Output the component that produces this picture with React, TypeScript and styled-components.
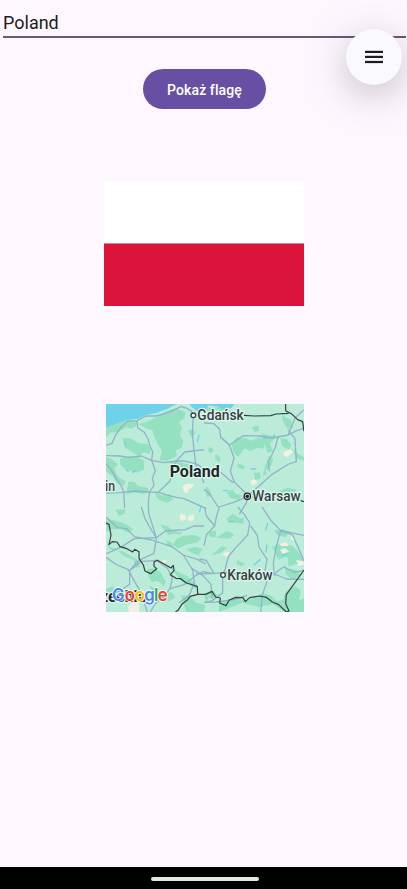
import React from 'react';
import styled, { createGlobalStyle } from 'styled-components';

const GlobalStyle = createGlobalStyle`
  * { box-sizing: border-box; }
  html, body { margin: 0; padding: 0; background: #fef7ff; }
  body { font-family: Roboto, "Liberation Sans", sans-serif; overflow: hidden; }
`;

const Screen = styled.div`
  position: relative;
  display: flex;
  flex-direction: column;
  width: 407px;
  height: 889px;
  background: #fef7ff;
  overflow: hidden;
`;

const Content = styled.main`
  flex: 1;
  display: flex;
  flex-direction: column;
  align-items: center;
  padding: 0 1px 0 3px;
`;

const CountryInput = styled.input`
  align-self: stretch;
  height: 38px;
  padding: 8px 0 0;
  border: 0;
  border-bottom: 2px solid #685b77;
  border-radius: 0;
  outline: 0;
  background: transparent;
  color: #1d1b20;
  font: 400 18px/28px Roboto, "Liberation Sans", sans-serif;
  letter-spacing: 0;
`;

const ShowButton = styled.button`
  width: 123px;
  height: 40px;
  margin-top: 31px;
  padding: 2px 0 0;
  border: 0;
  border-radius: 20px;
  background: #6750a4;
  color: #fff;
  font: 500 14px/20px Roboto, "Liberation Sans", sans-serif;
  letter-spacing: 0.1px;
`;

const Flag = styled.div`
  display: flex;
  flex-direction: column;
  width: 200px;
  height: 125px;
  margin: 72px 1px 0 0;
`;

const Stripe = styled.div<{ $color: string; $height: number }>`
  height: ${(p) => p.$height}px;
  background: ${(p) => p.$color};
`;

const MapView = styled.svg`
  display: block;
  width: 198px;
  height: 208px;
  margin: 98px 0 0 1px;
`;

const MenuFab = styled.button`
  position: absolute;
  top: 28.5px;
  left: 346px;
  display: flex;
  align-items: center;
  justify-content: center;
  width: 56px;
  height: 56px;
  padding: 0;
  border: 0;
  border-radius: 50%;
  background: #f9f9ff;
  box-shadow: 0 10px 30px rgba(20, 10, 20, 0.14), 0 8px 60px rgba(20, 10, 20, 0.12);
`;

const NavigationBar = styled.footer`
  display: flex;
  align-items: center;
  justify-content: center;
  height: 22px;
  padding: 2px 0 0 2px;
  background: #000;
`;

const HomeHandle = styled.div`
  width: 108px;
  height: 4px;
  border-radius: 2px;
  background: #e6e6e6;
`;

const forests = [
  'M6 78L40 61 74 53 99 58 96 72 81 80 67 76 43 90 19 92 6 105Z',
  'M103 67L133 58 164 42 187 27 216 19 244 30 242 48 225 60 234 78 227 98 238 116 232 139 214 145 219 162 188 177 166 174 174 147 162 128 150 102 145 85 125 78Z',
  'M57 108L78 109 105 124 131 126 140 141 137 156 119 151 104 162 78 146 61 134Z',
  'M48 170L75 162 104 165 121 178 119 204 98 212 63 201 49 188Z',
  'M6 166L22 170 42 187 31 199 41 223 65 238 59 253 39 244 25 222 6 208Z',
  'M72 240L90 239 103 252 131 257 135 271 114 277 91 271 68 278Z',
  'M150 270L173 280 196 278 209 292 190 302 164 293Z',
  'M198 177L226 181 258 188 277 203 258 207 231 195 201 195Z',
  'M252 87L265 81 276 93 263 106Z',
  'M300 12L319 17 346 15 375 21 383 29 360 31 335 23 311 29Z',
  'M383 124L398 106 424 108 441 116 467 106 486 118 477 140 459 137 439 148 423 139 402 165 388 151Z',
  'M473 94L501 102 512 95 516 108 497 124 507 147 492 154 484 133Z',
  'M443 75L463 71 467 86 452 91Z',
  'M314 135L330 142 322 155 311 147Z',
  'M335 155L350 167 348 183 333 172Z',
  'M529 109L547 110 562 128 556 144 535 133Z',
  'M533 38L560 54 568 75 554 85 538 61Z',
  'M564 139L587 159 600 166 600 176 575 169Z',
  'M401 184L423 193 417 203 400 196Z',
  'M450 213L468 211 470 229 453 235Z',
  'M495 162L508 171 502 190 485 207 489 218 476 221 482 196Z',
  'M526 267L550 257 577 263 568 282 536 281Z',
  'M305 252L317 264 323 281 308 285Z',
  'M367 270L386 263 396 275 413 280 405 295 378 287Z',
  'M6 351L32 355 56 362 75 371 87 383 74 393 49 381 22 382 6 390Z',
  'M35 323L65 322 61 336 45 342Z',
  'M168 367L191 373 203 384 224 391 235 389 229 398 208 395 194 399 180 383Z',
  'M218 410L237 401 273 399 292 407 281 421 251 427 221 439 206 430Z',
  'M247 442L273 434 295 441 284 460 263 453Z',
  'M188 414L204 422 207 438 188 431Z',
  'M129 502L152 499 171 512 185 538 180 552 162 537 144 540 132 518Z',
  'M195 491L222 510 248 522 265 536 281 548 276 560 249 547 231 538 217 518Z',
  'M6 418L22 437 39 440 33 449 15 440Z',
  'M41 447L57 448 79 461 103 475 108 494 95 498 88 473 61 463Z',
  'M6 561L24 553 42 565 55 578 36 588 6 590Z',
  'M134 551L157 559 174 577 203 570 214 586 196 598 164 588Z',
  'M231 581L256 580 276 602 304 609 300 630 247 630 239 607Z',
  'M315 387L337 387 334 407 315 402Z',
  'M367 349L387 335 408 350 420 345 418 366 395 362 374 362Z',
  'M337 407L368 387 391 396 378 410Z',
  'M322 460L353 433 370 437 350 453Z',
  'M511 385L535 381 556 390 545 405 520 400Z',
  'M505 435L530 424 566 432 591 459 600 493 576 485 554 495 550 464 523 473Z',
  'M401 474L424 487 413 493 397 485Z',
  'M300 575L326 563 341 582 331 595 316 586 306 603Z',
  'M345 602L389 587 430 596 476 574 503 581 517 597 537 595 545 568 574 553 590 565 585 595 600 589 600 630 543 630 505 606 464 616 416 602 375 619 345 630Z',
  'M541 479L549 500 577 503 591 519 565 533 545 516Z',
];

const pale = [
  'M235 254L246 245 271 246 264 257 253 263 250 274 240 269Z',
  'M539 151L558 141 570 151 561 155 549 166 539 160Z',
  'M438 239L450 231 462 241 447 251Z',
  'M227 344L232 334 245 341 246 352 231 357Z',
  'M251 344L268 335 271 347 265 358 251 355Z',
  'M71 613L94 596 106 607 105 630 75 630Z',
  'M528 443L543 438 556 449 536 455Z',
  'M525 425L548 421 553 432 533 433Z',
  'M355 456L370 449 382 457 366 464Z',
  'M577 474L598 478 600 490 583 492Z',
  'M560 402L573 410 569 418 559 409Z',
  'M175 475L186 474 187 481 177 484Z',
];

const roads = [
  'M6 130L24 124 34 101 52 74 72 58 99 56 126 42 156 42 193 32 231 14 247 18 263 28 268 43 265 95 270 145 275 185 300 243',
  'M99 56L101 77 121 91 132 111 139 136 146 149 143 175 154 206 145 229 150 249 137 270 133 300 134 334 157 407',
  'M6 161L48 162 75 166 112 162 144 176 181 182 217 177 242 150 266 147 300 143',
  'M6 185L21 203 35 227 50 249 59 267 62 318',
  'M6 273L50 272 91 267 137 270 163 271 207 284 240 290 272 304 307 320',
  'M163 271L198 237 208 199 217 177',
  'M217 177L242 177 281 187 301 204',
  'M300 63L330 65 347 82 350 106 376 129 390 168 379 207 391 240 431 280 427 302 406 337',
  'M350 106L377 129 417 101 468 102 502 108 553 99 573 88 598 79',
  'M553 99L573 48 600 23',
  'M553 85L573 110 577 180',
  'M522 105L515 133 503 160 493 177 496 208',
  'M430 284L466 251 504 217 554 186 577 179',
  'M300 262L317 276 345 318 337 345 332 372 308 397 300 431',
  'M350 211L384 240 391 240',
  'M345 315L397 298 430 284',
  'M401 315L421 337 437 363 431 399 399 433 374 462 363 501 356 522 356 573 323 597 300 602',
  'M440 372L460 400 465 435 489 472 482 512 488 543 475 578 470 630',
  'M474 315L501 356 530 386 518 430 508 481 510 514 487 521',
  'M530 386L566 399 579 428 600 477',
  'M530 386L600 400',
  'M300 510L327 514 361 512 424 518 483 514 519 519 547 531 600 532',
  'M157 407L185 387 244 383 270 372 300 372',
  'M112 315L123 350 144 387 157 407 150 454 117 469 98 480 77 506 77 547 46 568 6 576',
  'M6 345L41 377 68 380 91 404 143 414 202 433 238 459 280 472 306 486',
  'M6 456L55 433 91 410 157 407',
  'M6 466L39 489 72 502 92 539 111 571 130 630',
  'M77 506L110 479 157 475 190 498 205 529 198 560 177 586 153 606 139 630',
  'M198 560L240 548 276 520 300 507',
  'M238 459L266 504 271 542 255 581 225 602',
  'M263 499L296 520 321 547 324 589',
  'M276 516L330 514 307 475 286 471',
  'M510 515L539 495 573 511 600 505',
  'M302 315L307 342 332 372',
  'M303 601L338 600 392 592 429 580',
];

const borders = [
  'M545 6L545 26 562 35 581 53 596 59 600 88',
  'M600 299L590 296',
  'M6 363L15 367 21 399 15 428 25 419 39 420 48 434 66 439 86 450 92 442 105 449 105 469 118 489 123 507 140 515 158 500 150 493 150 480 160 475 180 486 201 498 208 490 210 506 199 518 216 529 230 530 247 543 258 546 280 554 281 577 259 583 249 595 235 605 222 625 214 630',
  'M280 577L305 577 324 568 335 585 349 588 347 603 366 611 376 594 395 586 417 587 424 599 437 587 467 582 487 586 505 600 524 608 547 630 555 627 545 605 547 578 600 504',
];

interface LabelProps {
  x: number;
  y: number;
  text: string;
  width?: number;
  bold?: boolean;
}

const MapLabel = styled.text<{ $bold?: boolean }>`
  font: ${(p) => (p.$bold ? '700 49px' : '500 42px')} Roboto, "Liberation Sans", sans-serif;
  fill: ${(p) => (p.$bold ? '#20292a' : '#354245')};
  stroke: #e0f6ed;
  stroke-width: 7px;
  stroke-linejoin: round;
  paint-order: stroke;
`;

const Wordmark = styled.text`
  font: 600 50px Inter, Roboto, sans-serif;
  stroke: #fff;
  stroke-width: 4px;
  stroke-linejoin: round;
  paint-order: stroke;
`;

function PlaceLabel({ x, y, text, width, bold }: LabelProps) {
  return (
    <MapLabel x={x} y={y} textLength={width} lengthAdjust="spacingAndGlyphs" $bold={bold}>
      {text}
    </MapLabel>
  );
}

const wordmark: [string, string, number][] = [
  ['G', '#4285f4', 24],
  ['o', '#ea4335', 62],
  ['o', '#fbbc05', 92],
  ['g', '#4285f4', 121],
  ['l', '#34a853', 150],
  ['e', '#ea4335', 161],
];

function PolandMap() {
  return (
    <MapView viewBox="6 6 594 624" role="img" aria-label="Poland map">
      <rect x="6" y="6" width="594" height="624" fill="#bbecd9" />
      <g fill="#94e1c1" strokeLinejoin="round">
        {forests.map((d) => (
          <path key={d} d={d} />
        ))}
      </g>
      <g fill="#f1f0e2">
        {pale.map((d) => (
          <path key={d} d={d} />
        ))}
      </g>
      <path
        fill="#6dd2ea"
        d="M6 6H218L187 22 157 33 128 38 102 50 77 53 47 61 6 77ZM257 6H392L382 18 363 24 343 14 314 10 302 25 277 26 260 12Z"
      />
      <path
        d="M475 108l13 1M357 266l14-1M440 201l17 0M485 386l6-23M486 451l3-23M449 490l20-18M375 358l14 0M84 211l11-4M65 202l9 7M280 120l5-22M59 119l7 9M286 331l5-17M550 456l-18 4"
        fill="none"
        stroke="#6dd2ea"
        strokeWidth="4"
      />
      <g fill="none" stroke="#91b3c8" strokeWidth="3.9" strokeLinejoin="round">
        {roads.map((d) => (
          <path key={d} d={d} />
        ))}
      </g>
      <g fill="none" stroke="#34413f" strokeWidth="3.6" strokeLinejoin="round">
        {borders.map((d) => (
          <path key={d} d={d} />
        ))}
        <path d="M420 40L451 42 500 41 516 36 554 34" />
      </g>
      <PlaceLabel x={280} y={54} text="Gdańsk" width={139} />
      <PlaceLabel x={197} y={226} text="Poland" width={150} bold />
      <PlaceLabel x={445} y={298} text="Warsaw" width={145} />
      <PlaceLabel x={370} y={534} text="Kraków" width={136} />
      <PlaceLabel x={3} y={266} text="in" width={30} />
      <PlaceLabel x={-42} y={599} text="Czechia" width={168} bold />
      <circle cx="268" cy="40" r="7" fill="#fff" stroke="#354245" strokeWidth="4" />
      <circle cx="357" cy="519" r="7" fill="#fff" stroke="#354245" strokeWidth="4" />
      <circle cx="430" cy="283" r="9.5" fill="#fff" stroke="#1d2525" strokeWidth="4" />
      <circle cx="430" cy="283" r="5.5" fill="#1d2525" />
      <Wordmark>
        {wordmark.map(([letter, color, x]) => (
          <tspan key={x} x={x} y={597} fill={color}>
            {letter}
          </tspan>
        ))}
      </Wordmark>
    </MapView>
  );
}

export default function App() {
  return (
    <>
      <GlobalStyle />
      <Screen>
        <Content>
          <CountryInput defaultValue="Poland" aria-label="Country" spellCheck={false} />
          <ShowButton>Pokaż flagę</ShowButton>
          <Flag>
            <Stripe $color="#ffffff" $height={62} />
            <Stripe $color="#e58097" $height={1} />
            <Stripe $color="#dc143c" $height={62} />
          </Flag>
          <PolandMap />
        </Content>
        <MenuFab aria-label="Menu">
          <svg width="18" height="14" viewBox="0 0 18 14" fill="#1c1b20">
            <rect y="0.8" width="18" height="2.2" />
            <rect y="5.8" width="18" height="2.2" />
            <rect y="10.9" width="18" height="2.2" />
          </svg>
        </MenuFab>
        <NavigationBar>
          <HomeHandle />
        </NavigationBar>
      </Screen>
    </>
  );
}
